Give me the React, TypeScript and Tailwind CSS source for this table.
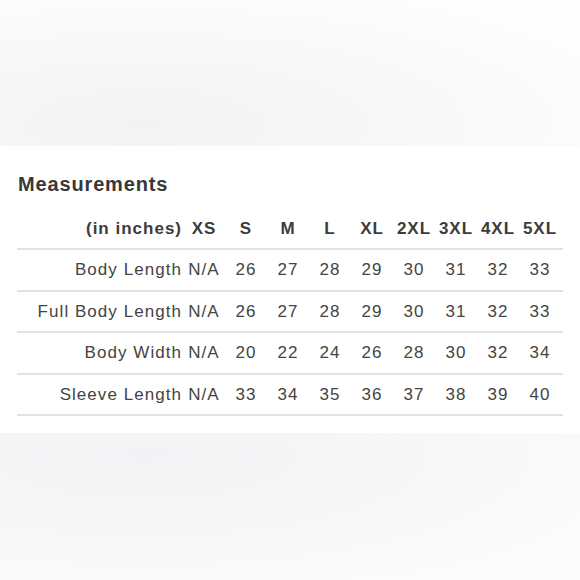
import React from 'react';

const SIZES = ['XS', 'S', 'M', 'L', 'XL', '2XL', '3XL', '4XL', '5XL'];

const ROWS: { label: string; values: string[] }[] = [
  { label: 'Body Length', values: ['N/A', '26', '27', '28', '29', '30', '31', '32', '33'] },
  { label: 'Full Body Length', values: ['N/A', '26', '27', '28', '29', '30', '31', '32', '33'] },
  { label: 'Body Width', values: ['N/A', '20', '22', '24', '26', '28', '30', '32', '34'] },
  { label: 'Sleeve Length', values: ['N/A', '33', '34', '35', '36', '37', '38', '39', '40'] },
];

const rowGrid = 'grid grid-cols-[166px_repeat(9,42px)] items-center h-[41.5px] border-b-2 border-[#e2e2e2]';

export default function App() {
  return (
    <div
      className="w-[580px] h-[580px] flex flex-col bg-white text-[#444]"
      style={{ fontFamily: '"Liberation Sans", Arial, Helvetica, sans-serif' }}
    >
      {/* top photo band */}
      <div className="h-[146px] bg-[radial-gradient(ellipse_at_25%_85%,#f3f3f3_0%,#f8f8f8_45%,#fefefe_90%)]" />

      {/* measurements table */}
      <div className="h-[287px] bg-white pt-[26px] pl-[17px]">
        <h2 className="text-[20px] leading-[24px] font-bold text-[#383838] tracking-[0.85px] pl-[1px]">
          Measurements
        </h2>

        <div className="mt-[12.5px] w-[546px]">
          <div className={`${rowGrid} font-bold text-[17px] tracking-[1px] text-[#3c3c3c] border-[#dcdcdc]`}>
            <div className="text-right pr-[1px]">(in inches)</div>
            {SIZES.map((s) => (
              <div key={s} className="text-center">
                {s}
              </div>
            ))}
          </div>

          {ROWS.map((row) => (
            <div key={row.label} className={`${rowGrid} text-[17px] tracking-[1.05px]`}>
              <div className="text-right pr-[1px] whitespace-nowrap">{row.label}</div>
              {row.values.map((v, i) => (
                <div key={i} className="text-center">
                  {v}
                </div>
              ))}
            </div>
          ))}
        </div>
      </div>

      {/* bottom photo band */}
      <div className="flex-1 bg-[radial-gradient(ellipse_at_25%_15%,#f3f3f5_0%,#f7f7f8_45%,#fcfcfc_90%)]" />
    </div>
  );
}
